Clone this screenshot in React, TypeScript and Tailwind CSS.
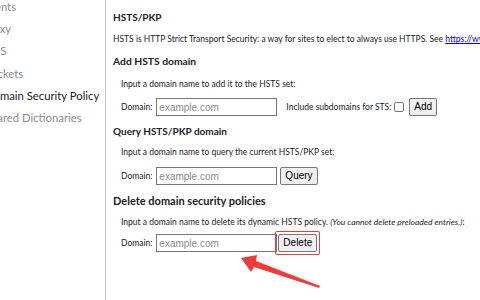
import React from "react";

const inputCls =
  "ml-[4px] w-[121px] h-[18px] border border-[#767676] px-[2px] text-[10px] font-['Liberation_Sans',sans-serif] placeholder:text-[#8a8a8a] outline-none";
const btnCls =
  "h-[18px] px-[4px] border border-[#767676] bg-[#efefef] rounded-[2px] text-[10px] font-['Liberation_Sans',sans-serif] text-black leading-none";

export default function App() {
  return (
    <div className="w-[480px] h-[300px] overflow-hidden bg-white flex relative font-['Lato',sans-serif]">
      <div className="w-[106px] shrink-0 border-r border-[#c8c8c8] overflow-hidden">
        <div className="-ml-[15px] flex flex-col text-[11.3px] leading-[22.2px] text-[#8a8a8a] whitespace-nowrap">
          <div className="-mt-[4px] -ml-[2px]">Events</div>
          <div className="-ml-[2px]">Proxy</div>
          <div className="-ml-[2px]">DNS</div>
          <div>Sockets</div>
          <div className="text-[#202124]">Domain Security Policy</div>
          <div>Shared Dictionaries</div>
        </div>
      </div>
      <div className="flex-1 pl-[7px] pt-[9px] text-[8.5px] text-[#202124] whitespace-nowrap overflow-hidden">
        <div className="font-bold text-[10px] leading-[16px]">HSTS/PKP</div>
        <div className="mt-[7px] leading-[14px]">
          HSTS is HTTP Strict Transport Security: a way for sites to elect to always use HTTPS. See{" "}
          <span className="text-[#0000ee] underline">https://www.chromium.org/hsts</span>
        </div>
        <div className="mt-[8px] font-bold text-[10.3px] leading-[14px]">Add HSTS domain</div>
        <div className="pl-[8px]">
          <div className="mt-[9px] leading-[14px]">Input a domain name to add it to the HSTS set:</div>
          <div className="mt-[7px] flex items-center h-[18px]">
            <span>Domain:</span>
            <input placeholder="example.com" className={inputCls} />
            <span className="ml-[9px]">Include subdomains for STS:</span>
            <span className="ml-[3px] w-[10px] h-[10px] border border-[#767676] rounded-[2px]" />
            <button className={"ml-[5px] " + btnCls}>Add</button>
          </div>
        </div>
        <div className="mt-[8px] font-bold text-[10px] leading-[14px]">Query HSTS/PKP domain</div>
        <div className="pl-[8px]">
          <div className="mt-[7px] leading-[14px]">Input a domain name to query the current HSTS/PKP set:</div>
          <div className="mt-[8px] flex items-center h-[18px]">
            <span>Domain:</span>
            <input placeholder="example.com" className={inputCls} />
            <button className={"ml-[3px] " + btnCls}>Query</button>
          </div>
        </div>
        <div className="mt-[8px] font-bold text-[11px] leading-[16px]">Delete domain security policies</div>
        <div className="pl-[8px]">
          <div className="mt-[6px] leading-[14px]">
            Input a domain name to delete its dynamic HSTS policy. <i>(You cannot delete preloaded entries.)</i>:
          </div>
          <div className="mt-[3px] flex items-center h-[22px]">
            <span>Domain:</span>
            <input placeholder="example.com" className={inputCls} />
            <span className="-ml-[2px] p-[2px] border-[1.5px] border-[#f0393a] rounded-[2px] flex">
              <button className={btnCls}>Delete</button>
            </span>
          </div>
        </div>
      </div>
      <svg className="absolute left-0 top-0 pointer-events-none" width="480" height="300">
        <polygon points="241,258 257,255 256,261 320,286 319,288 254,267 251,272" fill="#f2393a" />
      </svg>
    </div>
  );
}
